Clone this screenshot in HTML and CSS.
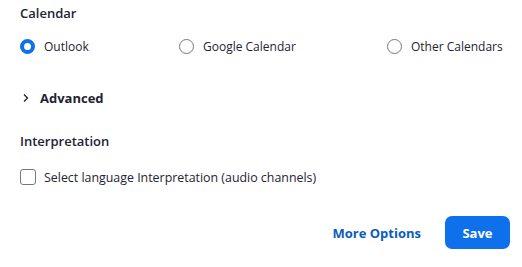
FILE: index.html
```html
<!DOCTYPE html>
<html lang="en">
<head>
<meta charset="UTF-8">
<title>Meeting Settings</title>
<link rel="stylesheet" href="styles.css">
</head>
<body>

<div class="panel">
    <h3 class="section-title">Calendar</h3>
    <div class="radio-row">
        <label class="radio"><span class="dot checked"></span>Outlook</label>
        <label class="radio"><span class="dot"></span>Google Calendar</label>
        <label class="radio"><span class="dot"></span>Other Calendars</label>
    </div>

    <div class="advanced">
        <svg class="chevron" width="8" height="10" viewBox="0 0 8 10"><path d="M2 1.5 L5.5 5 L2 8.5" fill="none" stroke="#222" stroke-width="1.3"/></svg>
        <span>Advanced</span>
    </div>

    <h3 class="section-title interp">Interpretation</h3>
    <label class="check"><span class="box"></span>Select language Interpretation (audio channels)</label>

    <div class="actions">
        <button class="link-btn">More Options</button>
        <button class="save-btn">Save</button>
    </div>
</div>

</body>
</html>
```

FILE: styles.css
```css
body {
    margin: 0;
    font-family: "Open Sans", "Noto Sans", sans-serif;
    color: #232333;
    background: #fff;
}
.panel {
    padding: 3px 12px 0 20px;
}
.section-title {
    font-size: 13px;
    font-weight: 600;
    margin: 0;
    line-height: 20px;
}
.radio-row {
    display: grid;
    grid-template-columns: 159px 208px 1fr;
    margin-top: 13px;
    height: 20px;
}
.radio, .check {
    display: flex;
    align-items: center;
    font-size: 12px;
    white-space: nowrap;
}
.check {
    font-size: 12.4px;
}
.dot {
    width: 15px;
    height: 15px;
    box-sizing: border-box;
    border: 1px solid #747487;
    border-radius: 50%;
    margin-right: 9px;
    flex: none;
}
.dot.checked {
    border: 4px solid #0e71eb;
}
.advanced {
    display: flex;
    align-items: center;
    margin-top: 32px;
    height: 20px;
    font-size: 13px;
    font-weight: 700;
}
.chevron {
    margin: 0 10px 0 2px;
}
.interp {
    margin-top: 23px;
}
.check {
    margin-top: 16px;
    height: 20px;
}
.box {
    width: 16px;
    height: 16px;
    box-sizing: border-box;
    border: 1px solid #747487;
    border-radius: 3px;
    margin-right: 8px;
    flex: none;
}
.actions {
    display: flex;
    justify-content: flex-end;
    align-items: center;
    margin-top: 29px;
}
.link-btn {
    background: none;
    border: none;
    font-family: inherit;
    font-size: 13px;
    font-weight: 700;
    color: #0b5cbf;
    padding: 0;
    margin-right: 24px;
    cursor: pointer;
}
.save-btn {
    width: 65px;
    height: 33px;
    border: none;
    border-radius: 7px;
    background: #0e71eb;
    color: #fff;
    font-family: inherit;
    font-size: 13px;
    font-weight: 700;
    cursor: pointer;
}
```
